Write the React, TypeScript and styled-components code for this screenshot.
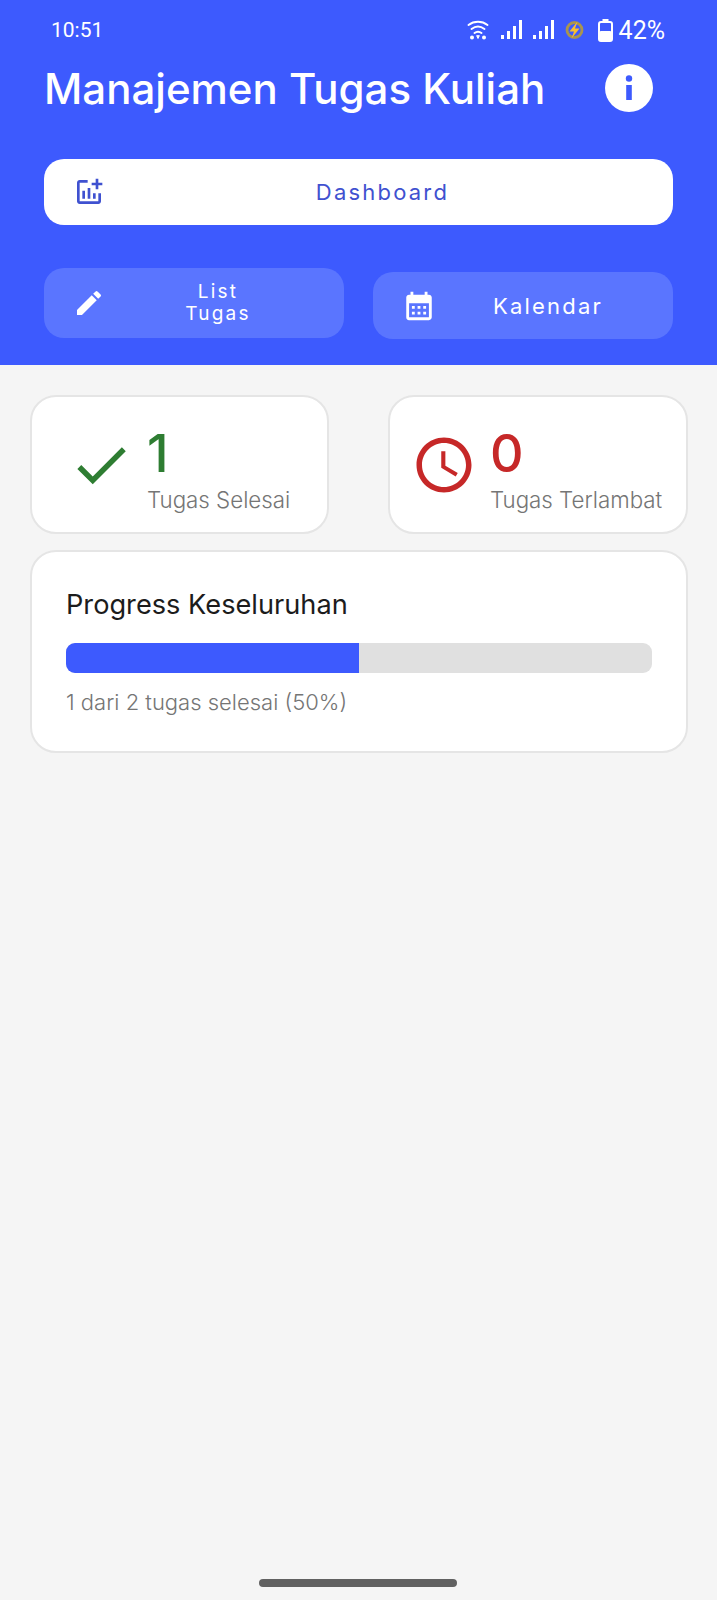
import React from "react";
import styled, { createGlobalStyle } from "styled-components";
import { MdOutlineAddchart, MdEdit, MdCalendarMonth, MdCheck, MdAccessTime } from "react-icons/md";

const GlobalStyle = createGlobalStyle`
  html, body {
    margin: 0;
    padding: 0;
    background: #f5f5f5;
    font-family: Inter, "Liberation Sans", sans-serif;
  }
`;

const Page = styled.div`
  position: relative;
  width: 717px;
  height: 1600px;
  background: #f5f5f5;
  overflow: hidden;
`;

const Header = styled.header`
  height: 365px;
  box-sizing: border-box;
  padding: 0 44px;
  background: #3d5afe;
  color: #fff;
`;

const StatusBar = styled.div`
  height: 60px;
  margin: 0 8px 0 7px;
  display: flex;
  align-items: center;
  justify-content: space-between;
  font-size: 21px;
  font-family: Roboto, sans-serif;
`;

const StatusIcons = styled.div`
  display: flex;
  align-items: center;
  gap: 11px;
`;

const WifiSlot = styled.span`
  display: flex;
  margin-right: 1px;
`;

const BatterySlot = styled.span`
  display: flex;
  margin-left: 3px;
`;

const BatteryPercent = styled.span`
  margin-left: -5px;
  font-size: 25px;
`;

const TitleRow = styled.div`
  height: 56px;
  display: flex;
  align-items: center;
  justify-content: space-between;
  padding-right: 20px;
`;

const Title = styled.h1`
  margin: 0;
  font-size: 42px;
  font-weight: 450;
  white-space: nowrap;
`;

const MainButton = styled.div`
  height: 66px;
  margin-top: 43px;
  border-radius: 20px;
  background: #fff;
  color: #3f51d0;
  display: flex;
  align-items: center;
  padding: 0 29px;
  letter-spacing: 2.2px;
`;

const ButtonRow = styled.div`
  margin-top: 43px;
  display: flex;
  justify-content: space-between;
  align-items: flex-start;
`;

const SubButton = styled.div<{ $top?: number; $height: number }>`
  width: 300px;
  height: ${(p) => p.$height}px;
  margin-top: ${(p) => p.$top ?? 0}px;
  border-radius: 20px;
  background: #5a75ff;
  display: flex;
  align-items: center;
  padding: 0 29px;
  box-sizing: border-box;
  letter-spacing: 2.2px;
`;

const ButtonLabel = styled.span<{ $size: number }>`
  flex: 1;
  text-align: center;
  font-size: ${(p) => p.$size}px;
  font-weight: 400;
  line-height: 22px;
  margin-right: -16px;
`;

const Content = styled.main`
  padding: 30px 29px 0 30px;
  display: flex;
  flex-direction: column;
  gap: 16px;
`;

const StatRow = styled.div`
  display: flex;
  justify-content: space-between;
`;

const Card = styled.section`
  background: #fff;
  border: 2px solid #e5e5e5;
  box-sizing: border-box;
  border-radius: 26px;
`;

const StatCard = styled(Card)<{ $pad: number; $width: number }>`
  width: ${(p) => p.$width}px;
  height: 139px;
  display: flex;
  align-items: center;
  gap: 13px;
  padding-left: ${(p) => p.$pad}px;
`;

const StatText = styled.div`
  padding-top: 8px;
`;

const StatValue = styled.div<{ $color: string }>`
  color: ${(p) => p.$color};
  font-size: 52px;
  font-weight: 500;
  line-height: 58px;
`;

const StatLabel = styled.div`
  margin-top: 4px;
  color: #757575;
  font-size: 22.3px;
  font-weight: 300;
  line-height: 26px;
  white-space: nowrap;
`;

const ProgressCard = styled(Card)`
  height: 203px;
  padding: 37px 34px 0;
`;

const ProgressTitle = styled.div`
  color: #1c1c1c;
  font-size: 27.2px;
  font-weight: 400;
  line-height: 32px;
`;

const Track = styled.div`
  margin-top: 22px;
  height: 30px;
  border-radius: 9px;
  background: #e0e0e0;
  overflow: hidden;
`;

const Fill = styled.div`
  height: 100%;
  background: #3d5afe;
`;

const ProgressText = styled.div`
  margin-top: 15px;
  color: #757575;
  font-size: 22px;
  font-weight: 300;
  line-height: 28px;
`;

const HomeBar = styled.div`
  position: absolute;
  left: 259px;
  bottom: 13px;
  width: 198px;
  height: 8px;
  border-radius: 4px;
  background: #616161;
`;

function WifiIcon() {
  return (
    <svg width="22" height="20" viewBox="0 0 22 20" fill="none" stroke="#fff" strokeWidth="2" strokeLinecap="round">
      <path d="M1.5 5C7 0.8 15 0.8 20.5 5" />
      <path d="M4.5 9C8.5 6 13.5 6 17.5 9" />
      <path d="M7.5 13C9.5 11.5 12.5 11.5 14.5 13" />
      <circle cx="5" cy="17.5" r="1" fill="#fff" />
      <path d="M9.8 16L11 18.5L12.2 16Z" fill="#fff" strokeWidth="1" />
      <circle cx="17" cy="17.5" r="1" fill="#fff" />
    </svg>
  );
}

function SignalIcon() {
  return (
    <svg width="21" height="20" viewBox="0 0 21 20" fill="#fff">
      <rect x="0" y="15" width="3" height="4" />
      <rect x="6" y="11" width="3" height="8" />
      <rect x="12" y="6" width="3" height="13" />
      <rect x="18" y="0" width="3" height="19" />
    </svg>
  );
}

function BoltIcon() {
  return (
    <svg width="19" height="20" viewBox="0 0 19 20" fill="none">
      <circle cx="9.5" cy="10" r="7.5" stroke="#a9954f" strokeWidth="2.8" />
      <path d="M12.5 1.5L4.5 11.5H9L6.5 18.5L14.5 8.5H10Z" fill="#fbc02d" />
    </svg>
  );
}

function BatteryIcon() {
  return (
    <svg width="15" height="23" viewBox="0 0 15 23" fill="none">
      <rect x="4.5" y="0" width="6" height="3" fill="#fff" />
      <rect x="1" y="3" width="13" height="19" rx="2" stroke="#fff" strokeWidth="2" />
      <rect x="1" y="12" width="13" height="10" rx="2" fill="#fff" />
    </svg>
  );
}

function InfoIcon() {
  return (
    <svg width="48" height="48" viewBox="0 0 48 48">
      <circle cx="24" cy="24" r="24" fill="#fff" />
      <circle cx="24" cy="14.5" r="3.2" fill="#3d5afe" />
      <rect x="21.2" y="21" width="5.6" height="15" fill="#3d5afe" />
    </svg>
  );
}

function App() {
  return (
    <Page>
      <GlobalStyle />
      <Header>
        <StatusBar>
          <span>10:51</span>
          <StatusIcons>
            <WifiSlot>
              <WifiIcon />
            </WifiSlot>
            <SignalIcon />
            <SignalIcon />
            <BoltIcon />
            <BatterySlot>
              <BatteryIcon />
            </BatterySlot>
            <BatteryPercent>42%</BatteryPercent>
          </StatusIcons>
        </StatusBar>
        <TitleRow>
          <Title>Manajemen Tugas Kuliah</Title>
          <InfoIcon />
        </TitleRow>
        <MainButton>
          <MdOutlineAddchart size={32} />
          <ButtonLabel $size={22}>Dashboard</ButtonLabel>
        </MainButton>
        <ButtonRow>
          <SubButton $height={70}>
            <MdEdit size={32} />
            <ButtonLabel $size={19}>
              List
              <br />
              Tugas
            </ButtonLabel>
          </SubButton>
          <SubButton $height={67} $top={4}>
            <MdCalendarMonth size={34} />
            <ButtonLabel $size={22}>Kalendar</ButtonLabel>
          </SubButton>
        </ButtonRow>
      </Header>
      <Content>
        <StatRow>
          <StatCard $pad={36} $width={299}>
            <MdCheck size={66} color="#2e7d32" />
            <StatText>
              <StatValue $color="#2e7d32">1</StatValue>
              <StatLabel>Tugas Selesai</StatLabel>
            </StatText>
          </StatCard>
          <StatCard $pad={21} $width={300}>
            <MdAccessTime size={66} color="#c62828" />
            <StatText>
              <StatValue $color="#c62828">0</StatValue>
              <StatLabel>Tugas Terlambat</StatLabel>
            </StatText>
          </StatCard>
        </StatRow>
        <ProgressCard>
          <ProgressTitle>Progress Keseluruhan</ProgressTitle>
          <Track>
            <Fill style={{ width: "50%" }} />
          </Track>
          <ProgressText>1 dari 2 tugas selesai (50%)</ProgressText>
        </ProgressCard>
      </Content>
      <HomeBar />
    </Page>
  );
}

export default App;
